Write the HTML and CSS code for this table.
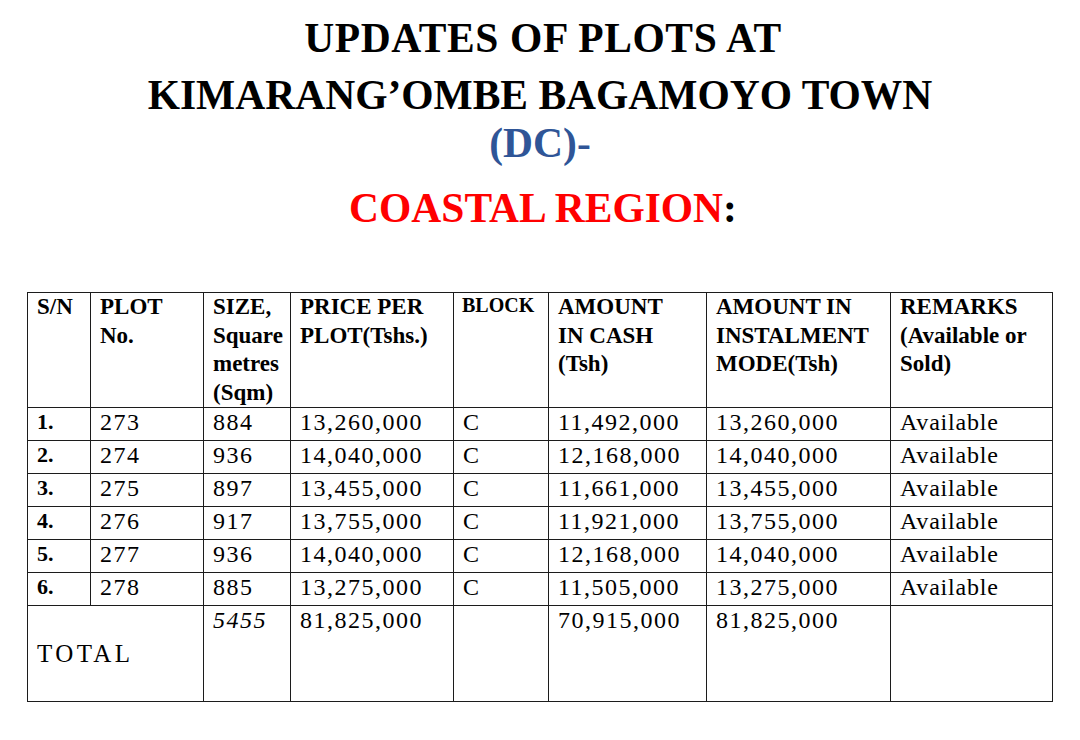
FILE: index.html
```html
<!DOCTYPE html>
<html>
<head>
<meta charset="utf-8">
<link rel="stylesheet" href="styles.css">
</head>
<body>
<div class="page">
  <header class="title">
    <div class="t-line t-first">UPDATES OF PLOTS AT</div>
    <div class="t-line t-second">KIMARANG’OMBE BAGAMOYO TOWN</div>
    <div class="t-line t-blue">(DC)-</div>
    <div class="t-line t-region"><span class="t-red">COASTAL REGION</span>:</div>
  </header>

  <table class="plots">
    <colgroup>
      <col class="c-sn">
      <col class="c-plot">
      <col class="c-size">
      <col class="c-price">
      <col class="c-block">
      <col class="c-cash">
      <col class="c-inst">
      <col class="c-rem">
    </colgroup>
    <thead>
      <tr>
        <th>S/N</th>
        <th>PLOT<br>No.</th>
        <th>SIZE,<br>Square<br>metres<br>(Sqm)</th>
        <th>PRICE PER<br>PLOT(Tshs.)</th>
        <th class="th-block">BLOCK</th>
        <th>AMOUNT<br>IN CASH<br>(Tsh)</th>
        <th>AMOUNT IN<br>INSTALMENT<br>MODE(Tsh)</th>
        <th>REMARKS<br>(Available or<br>Sold)</th>
      </tr>
    </thead>
    <tbody>
      <tr><td class="sn">1.</td><td class="num">273</td><td class="num">884</td><td class="num">13,260,000</td><td>C</td><td class="num">11,492,000</td><td class="num">13,260,000</td><td class="word">Available</td></tr>
      <tr><td class="sn">2.</td><td class="num">274</td><td class="num">936</td><td class="num">14,040,000</td><td>C</td><td class="num">12,168,000</td><td class="num">14,040,000</td><td class="word">Available</td></tr>
      <tr><td class="sn">3.</td><td class="num">275</td><td class="num">897</td><td class="num">13,455,000</td><td>C</td><td class="num">11,661,000</td><td class="num">13,455,000</td><td class="word">Available</td></tr>
      <tr><td class="sn">4.</td><td class="num">276</td><td class="num">917</td><td class="num">13,755,000</td><td>C</td><td class="num">11,921,000</td><td class="num">13,755,000</td><td class="word">Available</td></tr>
      <tr><td class="sn">5.</td><td class="num">277</td><td class="num">936</td><td class="num">14,040,000</td><td>C</td><td class="num">12,168,000</td><td class="num">14,040,000</td><td class="word">Available</td></tr>
      <tr><td class="sn">6.</td><td class="num">278</td><td class="num">885</td><td class="num">13,275,000</td><td>C</td><td class="num">11,505,000</td><td class="num">13,275,000</td><td class="word">Available</td></tr>
      <tr class="total">
        <td colspan="2" class="total-label">TOTAL</td>
        <td class="num italic">5455</td>
        <td class="num">81,825,000</td>
        <td></td>
        <td class="num">70,915,000</td>
        <td class="num">81,825,000</td>
        <td></td>
      </tr>
    </tbody>
  </table>
</div>
</body>
</html>
```

FILE: styles.css
```css
html, body {
  margin: 0;
  padding: 0;
  background: #ffffff;
}

.page {
  width: 1080px;
  height: 740px;
  overflow: hidden;
  color: #000;
}

.title {
  padding-top: 14px;
  text-align: center;
  font-family: "Liberation Serif", "Times New Roman", serif;
  font-weight: bold;
  font-size: 41.5px;
}

.t-line {
  line-height: 48px;
  white-space: nowrap;
}

.t-first {
  letter-spacing: 0.6px;
  padding-left: 6px;
}

.t-second {
  margin-top: 9px;
}

.t-blue {
  color: #2f5597;
}

.t-region {
  margin-top: 17px;
  padding-left: 6px;
}

.t-red {
  color: #ff0000;
}

.plots {
  margin-top: 60px;
  margin-left: 27px;
  width: 1026px;
  table-layout: fixed;
  border-collapse: collapse;
  font-family: "Liberation Serif", "Times New Roman", serif;
  font-size: 24px;
}

.c-sn { width: 63px; }
.c-plot { width: 113px; }
.c-size { width: 87px; }
.c-price { width: 163px; }
.c-block { width: 95px; }
.c-cash { width: 158px; }
.c-inst { width: 184px; }
.c-rem { width: 162px; }

.plots th,
.plots td {
  border: 1px solid #1c1c1c;
  text-align: left;
  vertical-align: top;
  white-space: nowrap;
  overflow: hidden;
}

.plots th {
  font-weight: bold;
  font-size: 23px;
  line-height: 28.5px;
  height: 113px;
  padding: 0 0 0 9px;
}

.plots th.th-block {
  font-size: 20px;
  line-height: 24px;
  padding-left: 8px;
}

.plots td {
  height: 28px;
  line-height: 28px;
  padding: 0 0 4px 9px;
}

.plots td.num {
  letter-spacing: 1.5px;
}

.plots td.word {
  letter-spacing: 0.8px;
}

.plots td.sn {
  font-weight: bold;
  font-size: 22px;
}

.plots tr.total td {
  height: 91px;
}

.plots td.total-label {
  vertical-align: middle;
  font-size: 25px;
  letter-spacing: 3.4px;
  padding-bottom: 0;
}

.plots td.italic {
  font-style: italic;
}
```
